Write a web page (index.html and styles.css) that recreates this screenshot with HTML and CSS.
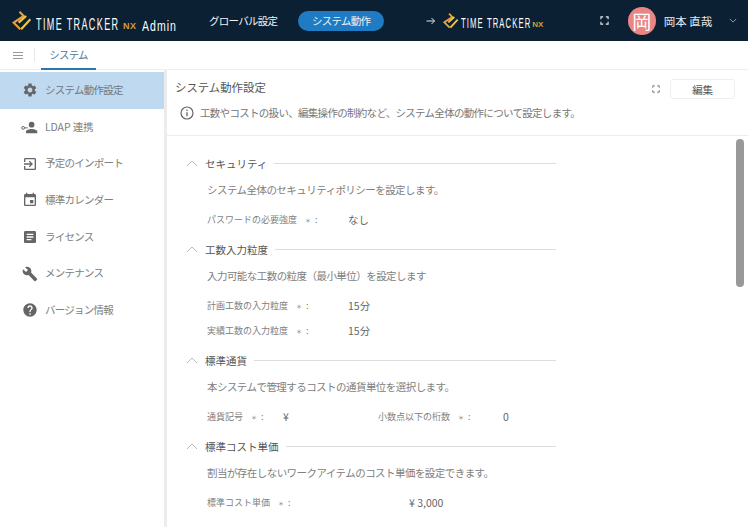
FILE: index.html
```html
<!DOCTYPE html>
<html lang="ja">
<head>
<meta charset="utf-8">
<title>システム動作設定</title>
<link rel="stylesheet" href="styles.css">
</head>
<body>
<header class="topbar">
  <div class="brand">
    <svg class="logo" viewBox="0 0 24 24"><path d="M9 1l5 5L2 14l8 8" fill="none" stroke="#e9a13b" stroke-width="2.6"/><path d="M22 10L11 22M17 6L8 14" fill="none" stroke="#f0c545" stroke-width="2.600"/></svg>
    <span class="brand-name">TIME TRACKER</span><span class="brand-nx">NX</span><span class="brand-admin">Admin</span>
  </div>
  <nav class="topnav">
    <span class="topnav-item">グローバル設定</span>
    <span class="topnav-item topnav-active">システム動作</span>
  </nav>
  <div class="jump">
    <svg class="jump-arrow" viewBox="0 0 12 12"><path d="M1.500 6h8M6.500 3l3 3-3 3" fill="none" stroke="#dfe5ea" stroke-width="1"/></svg>
    <svg class="logo-small" viewBox="0 0 24 24"><path d="M9 1l5 5L2 14l8 8" fill="none" stroke="#e9a13b" stroke-width="2.800"/><path d="M22 10L11 22M17 6L8 14" fill="none" stroke="#f0c545" stroke-width="2.800"/></svg>
    <span class="jump-name">TIME TRACKER</span><span class="jump-nx">NX</span>
  </div>
  <svg class="expand" viewBox="0 0 10 10"><path d="M1 3.500V1h2.500M6.500 1H9v2.500M9 6.500V9H6.500M3.500 9H1V6.500" fill="none" stroke="#e8edf0" stroke-width="1.200"/></svg>
  <div class="avatar">岡</div>
  <span class="username">岡本 直哉</span>
  <svg class="caret" viewBox="0 0 10 6"><path d="M1 1l4 4 4-4" fill="none" stroke="#aeb9c2" stroke-width="1"/></svg>
</header>
<div class="tabbar">
  <svg class="menu" viewBox="0 0 10 7"><path d="M0 .5h10M0 3.500h10M0 6.500h10" stroke="#999" stroke-width="1"/></svg>
  <span class="tab-sep"></span>
  <span class="tab">システム</span>
</div>
<div class="main">
  <aside class="sidebar">
    <div class="side-item side-active"><svg class="side-icon" viewBox="0 0 24 24"><path d="M19.140 12.940c.04-.3.06-.61.06-.94 0-.32-.02-.64-.07-.94l2.030-1.580c.18-.14.23-.41.12-.61l-1.920-3.320c-.12-.22-.37-.29-.59-.22l-2.390.96c-.5-.38-1.030-.7-1.620-.94l-.36-2.540c-.04-.24-.24-.41-.48-.41h-3.840c-.24 0-.43.17-.47.41l-.36 2.540c-.59.24-1.130.57-1.620.94l-2.390-.96c-.22-.08-.47 0-.59.22L2.740 8.870c-.12.21-.08.47.12.61l2.030 1.580c-.05.3-.09.63-.09.94s.02.64.07.94l-2.030 1.580c-.18.14-.23.41-.12.61l1.920 3.320c.12.22.37.29.59.22l2.390-.96c.5.38 1.030.7 1.620.94l.36 2.54c.05.24.24.41.48.41h3.840c.24 0 .44-.17.47-.41l.36-2.540c.59-.24 1.130-.56 1.620-.94l2.390.96c.22.08.47 0 .59-.22l1.920-3.320c.12-.22.07-.47-.12-.61l-2.010-1.580zM12 15.600c-1.980 0-3.600-1.620-3.600-3.600s1.620-3.600 3.600-3.600 3.600 1.620 3.600 3.600-1.620 3.600-3.600 3.600z"/></svg><span class="side-text">システム動作設定</span></div>
    <div class="side-item side-ldap"><svg class="side-icon side-icon-wide" viewBox="0 0 24 18"><circle cx="3" cy="9.500" r="2" fill="none" stroke="#666" stroke-width="1.400"/><path d="M5 8.800h4.500v1.400H5z"/><circle cx="15" cy="5" r="4"/><path d="M7 17v-2.400C7 12.200 12.300 11 15 11s8 1.200 8 3.600V17z"/></svg><span class="side-text">LDAP 連携</span></div>
    <div class="side-item"><svg class="side-icon" viewBox="0 0 24 24"><path d="M10.090 15.590L11.500 17l5-5-5-5-1.410 1.410L12.670 11H3v2h9.670l-2.580 2.590zM19 3H5c-1.110 0-2 .9-2 2v4h2V5h14v14H5v-4H3v4c0 1.100.89 2 2 2h14c1.100 0 2-.9 2-2V5c0-1.100-.9-2-2-2z"/></svg><span class="side-text">予定のインポート</span></div>
    <div class="side-item"><svg class="side-icon" viewBox="0 0 24 24"><path d="M17 12h-5v5h5v-5zM16 1v2H8V1H6v2H5c-1.110 0-1.990.9-1.990 2L3 19c0 1.100.89 2 2 2h14c1.100 0 2-.9 2-2V5c0-1.100-.9-2-2-2h-1V1h-2zm3 18H5V8h14v11z"/></svg><span class="side-text">標準カレンダー</span></div>
    <div class="side-item"><svg class="side-icon" viewBox="0 0 24 24"><path d="M19 3H5c-1.100 0-2 .9-2 2v14c0 1.100.9 2 2 2h14c1.100 0 2-.9 2-2V5c0-1.100-.9-2-2-2zm-5 14H7v-2h7v2zm3-4H7v-2h10v2zm0-4H7V7h10v2z"/></svg><span class="side-text">ライセンス</span></div>
    <div class="side-item"><svg class="side-icon" viewBox="0 0 24 24"><path d="M22.700 19l-9.100-9.100c.9-2.300.4-5-1.500-6.900-2-2-5-2.400-7.400-1.300L9 6 6 9 1.600 4.700C.4 7.100.9 10.100 2.900 12.100c1.900 1.900 4.600 2.400 6.900 1.500l9.100 9.100c.4.4 1 .4 1.400 0l2.300-2.300c.5-.4.5-1.100.1-1.400z"/></svg><span class="side-text">メンテナンス</span></div>
    <div class="side-item"><svg class="side-icon" viewBox="0 0 24 24"><path d="M12 2C6.480 2 2 6.480 2 12s4.480 10 10 10 10-4.480 10-10S17.520 2 12 2zm1 17h-2v-2h2v2zm2.070-7.750l-.9.920C13.450 12.900 13 13.500 13 15h-2v-.5c0-1.100.45-2.100 1.170-2.830l1.240-1.260c.37-.36.59-.86.59-1.410 0-1.100-.9-2-2-2s-2 .9-2 2H8c0-2.210 1.790-4 4-4s4 1.790 4 4c0 .88-.36 1.680-.93 2.250z"/></svg><span class="side-text">バージョン情報</span></div>
  </aside>
  <main class="content">
    <div class="page-head">
      <div class="title-row">
        <h1 class="page-title">システム動作設定</h1>
        <svg class="expand expand-page" viewBox="0 0 10 10"><path d="M1 3.500V1h2.500M6.500 1H9v2.500M9 6.500V9H6.500M3.500 9H1V6.500" fill="none" stroke="#666" stroke-width="1.100"/></svg>
        <button class="edit">編集</button>
      </div>
      <div class="info-row">
        <svg class="info-icon" viewBox="0 0 14 14"><circle cx="7" cy="7" r="6" fill="none" stroke="#666" stroke-width="1.200"/><path d="M7 6.200v4M7 3.600v1.400" stroke="#666" stroke-width="1.300"/></svg>
        <span>工数やコストの扱い、編集操作の制約など、システム全体の動作について設定します。</span>
      </div>
    </div>
    <div class="settings">
      <section class="section">
        <div class="sec-head"><svg class="chev" viewBox="0 0 12 7"><path d="M1 6l5-5 5 5" fill="none" stroke="#bbb" stroke-width="1"/></svg><h2 class="sec-title">セキュリティ</h2><span class="sec-line"></span></div>
        <p class="sec-desc">システム全体のセキュリティポリシーを設定します。</p>
        <div class="row"><span class="label label-field">パスワードの必要強度<span class="req">＊</span>:</span><span class="value">なし</span></div>
      </section>
      <section class="section">
        <div class="sec-head"><svg class="chev" viewBox="0 0 12 7"><path d="M1 6l5-5 5 5" fill="none" stroke="#bbb" stroke-width="1"/></svg><h2 class="sec-title">工数入力粒度</h2><span class="sec-line"></span></div>
        <p class="sec-desc">入力可能な工数の粒度（最小単位）を設定します</p>
        <div class="row"><span class="label label-field">計画工数の入力粒度<span class="req">＊</span>:</span><span class="value">15分</span></div>
        <div class="row"><span class="label label-field">実績工数の入力粒度<span class="req">＊</span>:</span><span class="value">15分</span></div>
      </section>
      <section class="section">
        <div class="sec-head"><svg class="chev" viewBox="0 0 12 7"><path d="M1 6l5-5 5 5" fill="none" stroke="#bbb" stroke-width="1"/></svg><h2 class="sec-title">標準通貨</h2><span class="sec-line"></span></div>
        <p class="sec-desc">本システムで管理するコストの通貨単位を選択します。</p>
        <div class="row"><span class="label label-currency">通貨記号<span class="req">＊</span>:</span><span class="value value-currency">¥</span><span class="label label-digits">小数点以下の桁数<span class="req">＊</span>:</span><span class="value">0</span></div>
      </section>
      <section class="section">
        <div class="sec-head"><svg class="chev" viewBox="0 0 12 7"><path d="M1 6l5-5 5 5" fill="none" stroke="#bbb" stroke-width="1"/></svg><h2 class="sec-title">標準コスト単価</h2><span class="sec-line"></span></div>
        <p class="sec-desc">割当が存在しないワークアイテムのコスト単価を設定できます。</p>
        <div class="row"><span class="label label-cost">標準コスト単価<span class="req">＊</span>:</span><span class="value">¥ 3,000</span></div>
      </section>
    </div>
    <div class="scrollbar"></div>
  </main>
</div>
</body>
</html>
```
FILE: styles.css
```css
* { box-sizing: border-box; }
html, body { margin: 0; height: 100%; overflow: hidden; }
body { font-family: "Noto Sans CJK JP", "Noto Sans", sans-serif; background: #fff; color: #555; font-size: 12px; display: flex; flex-direction: column; }

.topbar { height: 41px; flex: none; background: #0b2133; color: #fff; display: flex; align-items: center; padding-left: 12px; white-space: nowrap; }
.brand { display: flex; align-items: center; width: 197px; flex: none; }
.logo { width: 20px; height: 20px; flex: none; }
.brand-name, .brand-admin, .jump-name { font-family: "Liberation Sans", sans-serif; display: inline-block; transform-origin: left center; }
.brand-name { font-size: 16px; letter-spacing: 2.400px; width: 87px; margin: 9px 0 0 4px; transform: scaleX(.565); }
.brand-nx { font-family: "Liberation Sans", sans-serif; font-size: 9px; font-weight: 700; color: #d99a3a; width: 19px; margin-top: 11px; letter-spacing: .5px; }
.brand-admin { font-size: 15px; letter-spacing: 1.500px; margin-top: 9px; transform: scaleX(.7); }
.topnav { display: flex; align-items: center; gap: 21px; flex: none; }
.topnav-item { font-size: 10.500px; letter-spacing: -.75px; color: #f0f3f5; line-height: 20px; }
.topnav-active { background: #1f7cc4; border-radius: 10px; width: 86px; text-align: center; }
.jump { display: flex; align-items: center; margin-left: 41px; width: 174.500px; flex: none; }
.jump-arrow { width: 12px; height: 12px; flex: none; margin-right: 6px; }
.logo-small { width: 16px; height: 16px; flex: none; }
.jump-name { font-size: 14px; letter-spacing: 2px; width: 71px; margin: 5px 0 0 2px; transform: scaleX(.55); }
.jump-nx { font-family: "Liberation Sans", sans-serif; font-size: 8px; font-weight: 700; color: #d99a3a; margin-top: 7px; }
.expand { flex: none; width: 9px; height: 9px; }
.avatar { width: 28px; height: 28px; border-radius: 50%; background: #e98585; color: #fff; font-size: 19px; line-height: 28px; text-align: center; margin-left: 19px; flex: none; }
.username { font-size: 11.500px; color: #e4e9ed; margin-left: 8px; width: 65px; flex: none; }
.caret { width: 8px; height: 5px; flex: none; }

.tabbar { height: 29px; flex: none; display: flex; align-items: stretch; border-bottom: 1px solid #eee; padding-left: 13px; }
.menu { width: 10px; height: 7px; align-self: center; flex: none; }
.tab-sep { width: 1px; height: 14px; background: #e8e8e8; align-self: center; margin-left: 11px; flex: none; }
.tab { margin-left: 6px; width: 55px; text-align: center; font-size: 10.500px; letter-spacing: -.75px; line-height: 27px; color: #58788f; border-bottom: 2px solid #2b77ad; height: 29px; }

.main { flex: 1; min-height: 0; display: flex; }
.sidebar { width: 167px; flex: none; background: #fff; border-right: 3px solid #ececec; padding-top: 2px; }
.side-item { height: 36.700px; display: flex; align-items: center; padding-left: 21.500px; font-size: 10.500px; letter-spacing: -.75px; color: #808080; gap: 7.500px; }
.side-ldap { padding-left: 21px; gap: 7px; letter-spacing: -.1px; }
.side-text { margin-bottom: 2px; }
.side-active { background: #bed9f0; color: #707880; }
.side-icon { width: 16px; height: 16px; fill: #666; flex: none; }
.side-icon-wide { width: 17px; height: 13px; }

.content { flex: 1; min-width: 0; position: relative; overflow: hidden; }
.page-head { height: 66px; border-bottom: 1px solid #ececec; padding: 9px 13px 0 8px; }
.title-row { display: flex; align-items: center; height: 20px; }
.page-title { margin: 0 0 4px; font-size: 11.400px; font-weight: 400; color: #555; flex: 1; }
.expand-page { width: 8px; height: 8px; margin-right: 10px; }
.edit { width: 65px; height: 20px; background: #fff; border: 1px solid #eee; border-radius: 3px; font: inherit; font-size: 10.500px; letter-spacing: -.3px; color: #555; padding: 0; }
.info-row { display: flex; align-items: center; gap: 6px; margin-top: 6px; padding-left: 5px; font-size: 10.500px; letter-spacing: -.7px; color: #777; }
.info-icon { width: 14px; height: 14px; flex: none; }

.settings { padding: 17px 0 0 19px; width: 389px; }
.section { margin-bottom: 7px; }
.sec-head { display: flex; align-items: center; height: 20px; }
.chev { width: 12px; height: 7px; flex: none; }
.sec-title { margin: 0 0 0 7px; font-size: 10.500px; font-weight: 400; color: #555; }
.sec-line { flex: 1; height: 1px; background: #ddd; margin-left: 7px; }
.sec-desc { margin: 7px 0 7px 21px; font-size: 10.500px; letter-spacing: -.55px; line-height: 20px; color: #808080; }
.row { display: flex; align-items: center; height: 25px; padding-left: 21px; }
.label { font-size: 9px; color: #808080; flex: none; }
.req { font-size: 6px; margin: 0 4px 0 8px; }
.label-field { width: 141px; }
.label-currency { width: 76px; }
.value-currency { width: 95px; }
.label-digits { width: 125px; }
.label-cost { width: 202px; }
.value { font-size: 10.500px; color: #666; flex: none; }

.scrollbar { position: absolute; left: 569px; top: 69px; width: 8px; height: 148px; border-radius: 4px; background: #999; }
```
